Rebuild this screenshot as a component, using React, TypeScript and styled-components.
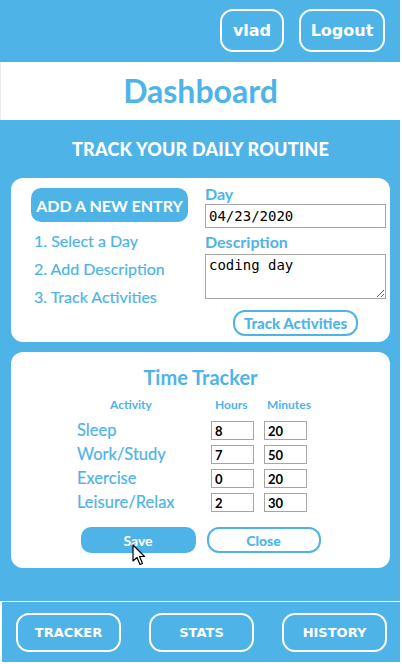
import React from 'react'
import styled, { createGlobalStyle } from 'styled-components'

const BLUE = '#4eb4e8'

const GlobalStyle = createGlobalStyle`
  html, body {
    margin: 0;
    padding: 0;
    background: #ffffff;
  }
  * {
    box-sizing: border-box;
  }
`

const Page = styled.div`
  width: 400px;
  height: 664px;
  display: flex;
  flex-direction: column;
  font-family: 'Lato', 'Open Sans', sans-serif;
`

const TopBar = styled.header`
  height: 62px;
  background: ${BLUE};
  display: flex;
  justify-content: flex-end;
  align-items: center;
  gap: 15px;
  padding: 0 15px 1px 0;
`

const OutlineButton = styled.button<{ $w: number; $h: number; $size?: number }>`
  width: ${p => p.$w}px;
  height: ${p => p.$h}px;
  background: transparent;
  border: 2px solid #ffffff;
  border-radius: 13px;
  color: #ffffff;
  font-family: 'DejaVu Sans', sans-serif;
  font-weight: 700;
  font-size: ${p => p.$size ?? 16}px;
  padding: 0;
  cursor: pointer;
`

const TitleBand = styled.div`
  height: 58px;
  background: #ffffff;
  border-left: 1px solid #ececec;
  display: flex;
  align-items: center;
  justify-content: center;
`

const Title = styled.h1`
  margin: 0;
  color: ${BLUE};
  font-size: 32px;
  font-weight: 700;
  padding-bottom: 2px;
`

const Main = styled.main`
  height: 481px;
  background: ${BLUE};
  padding: 0 10px 0 11px;
  display: flex;
  flex-direction: column;
  gap: 10px;
`

const SectionTitle = styled.h2`
  margin: 0;
  height: 58px;
  line-height: 58px;
  text-align: center;
  color: #ffffff;
  font-size: 18px;
  font-weight: 900;
  letter-spacing: 0.2px;
  margin-bottom: -10px;
`

const Card = styled.section`
  background: #ffffff;
  border-radius: 12px;
  position: relative;
`

const EntryCard = styled(Card)`
  height: 164px;
  display: flex;
`

const LeftCol = styled.div`
  width: 194px;
  padding: 10px 0 0 20px;
`

const RightCol = styled.div`
  width: 181px;
  padding-top: 6px;
  display: flex;
  flex-direction: column;
`

const FilledButton = styled.button<{ $w: number; $h: number; $size?: number }>`
  width: ${p => p.$w}px;
  height: ${p => p.$h}px;
  background: ${BLUE};
  border: none;
  border-radius: 10px;
  color: #ffffff;
  font-family: 'Lato', sans-serif;
  font-weight: 700;
  font-size: ${p => p.$size ?? 16}px;
  padding: 0;
  cursor: pointer;
`

const Steps = styled.ol`
  list-style: none;
  margin: 5px 0 0 3px;
  padding: 0;
`

const Step = styled.li`
  color: ${BLUE};
  font-size: 16px;
  line-height: 28px;
  -webkit-text-stroke: 0.2px ${BLUE};
`

const Label = styled.label<{ $top?: number }>`
  display: block;
  color: ${BLUE};
  font-size: 16px;
  font-weight: 700;
  line-height: 20px;
  margin-top: ${p => p.$top ?? 0}px;
`

const TextInput = styled.input`
  width: 181px;
  height: 24px;
  border: 1px solid #a6a6a6;
  border-radius: 0;
  padding: 0 3px;
  font-family: 'DejaVu Sans Mono', monospace;
  font-size: 14px;
  color: #000000;
`

const TextArea = styled.textarea`
  width: 181px;
  height: 45px;
  margin-top: 2px;
  border: 1px solid #a6a6a6;
  padding: 2px 3px;
  font-family: 'DejaVu Sans Mono', monospace;
  font-size: 14px;
  color: #000000;
  resize: both;
`

const LineButton = styled.button<{ $w: number; $h: number; $size?: number }>`
  width: ${p => p.$w}px;
  height: ${p => p.$h}px;
  background: #ffffff;
  border: 2px solid ${BLUE};
  border-radius: 12px;
  color: ${BLUE};
  font-family: 'Lato', sans-serif;
  font-weight: 900;
  font-size: ${p => p.$size ?? 15}px;
  padding: 0;
  cursor: pointer;
`

const CenterRow = styled.div<{ $top: number; $gap?: number }>`
  display: flex;
  justify-content: center;
  gap: ${p => p.$gap ?? 0}px;
  margin-top: ${p => p.$top}px;
`

const TrackerCard = styled(Card)`
  height: 216px;
  padding-top: 13px;
`

const TrackerTitle = styled.h3`
  margin: 0;
  text-align: center;
  color: ${BLUE};
  font-size: 20px;
  font-weight: 700;
  line-height: 24px;
`

const Grid = styled.div`
  display: grid;
  grid-template-columns: 134px 53px 43px;
  row-gap: 5px;
  margin: 8px 0 0 66px;
  align-items: center;
`

const HeadCell = styled.div<{ $shift?: number }>`
  color: ${BLUE};
  font-size: 12px;
  font-weight: 700;
  line-height: 16px;
  padding-left: ${p => p.$shift ?? 0}px;
  margin-bottom: 3px;
`

const ActivityName = styled.div`
  color: ${BLUE};
  font-size: 16.5px;
  line-height: 19px;
  -webkit-text-stroke: 0.2px ${BLUE};
`

const NumInput = styled.input`
  width: 43px;
  height: 19px;
  border: 1px solid #a6a6a6;
  padding: 0 3px;
  font-family: 'Lato', sans-serif;
  font-weight: 700;
  font-size: 13px;
  color: #000000;
`

const Cursor = styled.svg`
  position: absolute;
  left: 121px;
  top: 192px;
  pointer-events: none;
`

const NavBar = styled.nav`
  height: 60px;
  margin: 1px 0 0 2px;
  width: 398px;
  background: ${BLUE};
  display: flex;
  align-items: center;
  justify-content: space-between;
  padding: 0 13px 0 14px;
`

const activities = [
  { name: 'Sleep', hours: '8', minutes: '20' },
  { name: 'Work/Study', hours: '7', minutes: '50' },
  { name: 'Exercise', hours: '0', minutes: '20' },
  { name: 'Leisure/Relax', hours: '2', minutes: '30' },
]

export default function App() {
  return (
    <>
      <GlobalStyle />
      <Page>
        <TopBar>
          <OutlineButton $w={64} $h={43}>vlad</OutlineButton>
          <OutlineButton $w={86} $h={43}>Logout</OutlineButton>
        </TopBar>
        <TitleBand>
          <Title>Dashboard</Title>
        </TitleBand>
        <Main>
          <SectionTitle>TRACK YOUR DAILY ROUTINE</SectionTitle>
          <EntryCard>
            <LeftCol>
              <FilledButton $w={157} $h={34}>ADD A NEW ENTRY</FilledButton>
              <Steps>
                <Step>1. Select a Day</Step>
                <Step>2. Add Description</Step>
                <Step>3. Track Activities</Step>
              </Steps>
            </LeftCol>
            <RightCol>
              <Label>Day</Label>
              <TextInput defaultValue="04/23/2020" />
              <Label $top={4}>Description</Label>
              <TextArea defaultValue="coding day" />
              <CenterRow $top={11}>
                <LineButton $w={125} $h={26}>Track Activities</LineButton>
              </CenterRow>
            </RightCol>
          </EntryCard>
          <TrackerCard>
            <TrackerTitle>Time Tracker</TrackerTitle>
            <Grid>
              <HeadCell $shift={33}>Activity</HeadCell>
              <HeadCell $shift={4}>Hours</HeadCell>
              <HeadCell $shift={3}>Minutes</HeadCell>
              {activities.map(a => (
                <React.Fragment key={a.name}>
                  <ActivityName>{a.name}</ActivityName>
                  <NumInput defaultValue={a.hours} />
                  <NumInput defaultValue={a.minutes} />
                </React.Fragment>
              ))}
            </Grid>
            <CenterRow $top={15} $gap={11}>
              <FilledButton $w={115} $h={26} $size={14}>Save</FilledButton>
              <LineButton $w={114} $h={26} $size={14}>Close</LineButton>
            </CenterRow>
            <Cursor width="14" height="22" viewBox="0 0 14 22">
              <path
                d="M1 1 L1 17 L5 13.5 L8 20.5 L10.5 19.5 L7.5 12.5 L12.5 12.5 Z"
                fill="#ffffff"
                stroke="#000000"
                strokeWidth="1.2"
                strokeLinejoin="round"
              />
            </Cursor>
          </TrackerCard>
        </Main>
        <NavBar>
          <OutlineButton $w={105} $h={39} $size={13}>TRACKER</OutlineButton>
          <OutlineButton $w={105} $h={39} $size={13}>STATS</OutlineButton>
          <OutlineButton $w={105} $h={39} $size={13}>HISTORY</OutlineButton>
        </NavBar>
      </Page>
    </>
  )
}
